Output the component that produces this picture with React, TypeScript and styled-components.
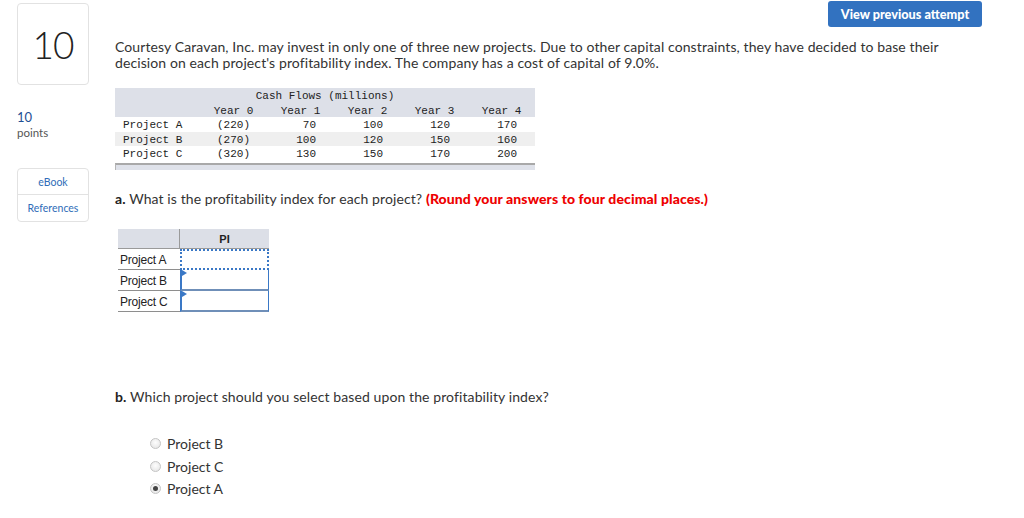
import React from "react";
import styled, { createGlobalStyle, css } from "styled-components";

const Global = createGlobalStyle`
  html, body { margin: 0; padding: 0; background: #fff; }
  body { font-family: Lato, "Noto Sans", Arial, sans-serif; color: #333; }
  * { box-sizing: border-box; }
`;

const Page = styled.div`
  display: grid;
  grid-template-columns: 115px 1fr;
  width: 1024px;
  height: 518px;
  overflow: hidden;
`;

const Sidebar = styled.aside`
  display: flex;
  flex-direction: column;
  padding: 3px 0 0 17px;
`;

const NumberBox = styled.div`
  width: 72px;
  height: 82px;
  border: 1px solid #e2e2e2;
  border-radius: 4px;
  display: flex;
  align-items: center;
  justify-content: center;
  font-size: 37px;
  font-weight: 300;
  color: #222;
  letter-spacing: -1px;
`;

const Points = styled.div`
  margin-top: 25px;
  display: flex;
  flex-direction: column;
  line-height: 15px;
`;

const PointsValue = styled.span`
  color: #1f4f94;
  font-size: 13px;
`;

const PointsLabel = styled.span`
  color: #555;
  font-size: 11.5px;
`;

const LinkBox = styled.div`
  margin-top: 28px;
  width: 72px;
  border: 1px solid #e2e2e2;
  border-radius: 4px;
  display: flex;
  flex-direction: column;
`;

const SideLink = styled.a<{ $first?: boolean }>`
  height: 26px;
  display: flex;
  align-items: center;
  justify-content: center;
  font-size: 10.5px;
  color: #2f6db8;
  text-decoration: none;
  ${(p) => p.$first && css`border-bottom: 1px solid #e2e2e2;`}
`;

const Main = styled.main`
  display: flex;
  flex-direction: column;
  align-items: flex-start;
`;

const TopBar = styled.div`
  align-self: stretch;
  display: flex;
  justify-content: flex-end;
  padding: 1px 42px 0 0;
`;

const PrimaryButton = styled.button`
  width: 154px;
  height: 26px;
  border: none;
  border-radius: 3px;
  background: #3272c0;
  color: #fff;
  font-family: Lato, "Noto Sans", Arial, sans-serif;
  font-weight: 900;
  font-size: 12.7px;
  padding: 0;
`;

const bodyText = css`
  font-size: 14px;
  letter-spacing: 0.1px;
  line-height: 16px;
  color: #333;
`;

const Paragraph = styled.p`
  ${bodyText}
  margin: 12px 0 0 0;
  width: 835px;
`;

const CashTable = styled.div`
  margin-top: 17px;
  width: 420px;
  font-family: "Liberation Mono", "Courier New", monospace;
  font-size: 11px;
  color: #222;
`;

const HeaderBand = styled.div`
  background: #dde0e8;
`;

const TitleRow = styled.div`
  height: 14.5px;
  line-height: 14.5px;
  text-align: center;
  padding-top: 1px;
`;

const GridRow = styled.div<{ $shade?: boolean }>`
  display: grid;
  grid-template-columns: 85px repeat(5, 67px);
  height: 14.5px;
  line-height: 14.5px;
  padding-top: 1px;
  background: ${(p) => (p.$shade ? "#efefef" : "transparent")};
`;

const Cell = styled.span<{ $align?: "left" | "center" | "right" }>`
  text-align: ${(p) => p.$align ?? "center"};
  padding-left: ${(p) => (p.$align === "left" ? "8px" : "0")};
  padding-right: ${(p) => (p.$align === "right" ? "18px" : "0")};
  white-space: pre;
`;

const ScrollBar = styled.div`
  margin-top: 2px;
  width: 420px;
  height: 7px;
  border-top: 2px solid #a9a9a9;
  border-left: 1px solid #b5b5b5;
  background: #dfe2ea;
`;

const Question = styled.p`
  ${bodyText}
  margin: 21.5px 0 0 0;
`;

const Bold = styled.b`
  font-weight: 700;
  color: #222;
`;

const Warn = styled.b`
  color: #ee0000;
  font-weight: 900;
`;

const PITable = styled.div`
  margin: 22px 0 0 3px;
  display: grid;
  grid-template-columns: 62px 89px;
  font-family: "Liberation Sans", Arial, sans-serif;
  font-size: 12px;
  color: #222;
`;

const PIHead = styled.div<{ $label?: boolean }>`
  height: 20px;
  background: #dcdfe7;
  display: flex;
  align-items: center;
  justify-content: center;
  font-weight: 700;
  font-size: 11px;
  border-right: ${(p) => (p.$label ? "1px solid #9a9a9a" : "none")};
  border-bottom: 1px solid #9a9a9a;
`;

const PILabel = styled.div`
  height: 21px;
  display: flex;
  align-items: center;
  padding: 2px 0 0 2px;
  border-bottom: 1px solid #8e8e8e;
  letter-spacing: -0.2px;
`;

const PIInput = styled.div<{ $focus?: boolean }>`
  position: relative;
  height: 21px;
  border-left: 2px solid #3a78c6;
  border-right: 1px solid #3a78c6;
  border-bottom: 2px solid #6f8fb8;
  ${(p) =>
    p.$focus &&
    css`
      border: 2px dotted #3a78c6;
    `}
`;

const Flag = styled.span`
  position: absolute;
  left: 0;
  top: 0;
  width: 0;
  height: 0;
  border-top: 3px solid transparent;
  border-bottom: 3px solid transparent;
  border-left: 5px solid #3a78c6;
`;

const QuestionB = styled(Question)`
  margin-top: 77px;
`;

const RadioList = styled.div`
  margin: 27px 0 0 35px;
  display: flex;
  flex-direction: column;
`;

const RadioRow = styled.label`
  height: 22.7px;
  display: flex;
  align-items: center;
  gap: 6px;
  font-size: 14px;
  color: #333;
`;

const RadioDot = styled.span<{ $checked?: boolean }>`
  width: 11px;
  height: 11px;
  border-radius: 50%;
  border: 1px solid #c4c4c4;
  background: radial-gradient(circle at 50% 40%, #fdfdfd 0%, #e2e2e2 100%);
  display: flex;
  align-items: center;
  justify-content: center;
  &::after {
    content: "";
    width: 5px;
    height: 5px;
    border-radius: 50%;
    background: ${(p) => (p.$checked ? "#444" : "transparent")};
  }
`;

const years = ["Year 0", "Year 1", "Year 2", "Year 3", "Year 4"];
const rows = [
  { name: "Project A", vals: ["(220)", "70", "100", "120", "170"] },
  { name: "Project B", vals: ["(270)", "100", "120", "150", "160"] },
  { name: "Project C", vals: ["(320)", "130", "150", "170", "200"] },
];

export default function App() {
  return (
    <>
      <Global />
      <Page>
        <Sidebar>
          <NumberBox>10</NumberBox>
          <Points>
            <PointsValue>10</PointsValue>
            <PointsLabel>points</PointsLabel>
          </Points>
          <LinkBox>
            <SideLink $first>eBook</SideLink>
            <SideLink>References</SideLink>
          </LinkBox>
        </Sidebar>
        <Main>
          <TopBar>
            <PrimaryButton>View previous attempt</PrimaryButton>
          </TopBar>
          <Paragraph>
            Courtesy Caravan, Inc. may invest in only one of three new projects. Due to other capital
            constraints, they have decided to base their decision on each project's profitability
            index. The company has a cost of capital of 9.0%.
          </Paragraph>
          <CashTable>
            <HeaderBand>
              <TitleRow>Cash Flows (millions)</TitleRow>
              <GridRow>
                <Cell />
                {years.map((y) => (
                  <Cell key={y}>{y}</Cell>
                ))}
              </GridRow>
            </HeaderBand>
            {rows.map((r, i) => (
              <GridRow key={r.name} $shade={i === 1}>
                <Cell $align="left">{r.name}</Cell>
                {r.vals.map((v, j) => (
                  <Cell key={j} $align={j === 0 ? "center" : "right"}>
                    {v}
                  </Cell>
                ))}
              </GridRow>
            ))}
          </CashTable>
          <ScrollBar />
          <Question>
            <Bold>a.</Bold> What is the profitability index for each project?{" "}
            <Warn>(Round your answers to four decimal places.)</Warn>
          </Question>
          <PITable>
            <PIHead $label />
            <PIHead>PI</PIHead>
            <PILabel>Project A</PILabel>
            <PIInput $focus />
            <PILabel>Project B</PILabel>
            <PIInput>
              <Flag />
            </PIInput>
            <PILabel>Project C</PILabel>
            <PIInput>
              <Flag />
            </PIInput>
          </PITable>
          <QuestionB>
            <Bold>b.</Bold> Which project should you select based upon the profitability index?
          </QuestionB>
          <RadioList>
            <RadioRow>
              <RadioDot />
              Project B
            </RadioRow>
            <RadioRow>
              <RadioDot />
              Project C
            </RadioRow>
            <RadioRow>
              <RadioDot $checked />
              Project A
            </RadioRow>
          </RadioList>
        </Main>
      </Page>
    </>
  );
}
